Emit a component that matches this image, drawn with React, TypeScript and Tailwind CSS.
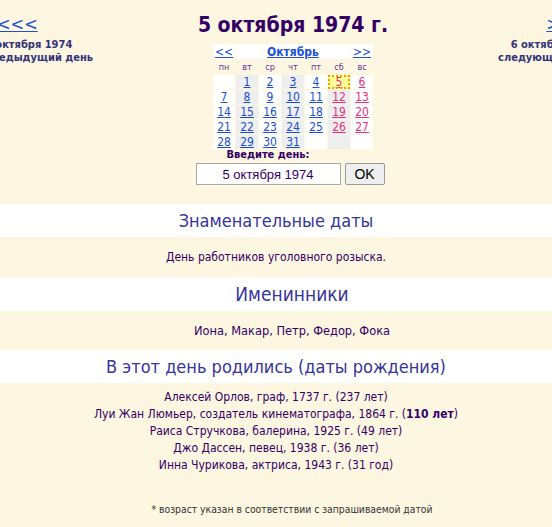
const tahoma = "font-['DejaVu_Sans_Condensed','DejaVu_Sans',sans-serif]"

type Day = { n?: number; gray: boolean; weekend: boolean; today?: boolean }

// October 1974 starts on a Tuesday
function buildWeeks(): Day[][] {
  const weeks: Day[][] = []
  let week: Day[] = []
  for (let i = 0; i < 35; i++) {
    const col = i % 7
    const day: Day = {
      n: i >= 1 && i <= 31 ? i : undefined,
      gray: col === 1 || col === 3 || col === 5,
      weekend: col >= 5,
      today: i === 5,
    }
    week.push(day)
    if (col === 6) {
      weeks.push(week)
      week = []
    }
  }
  return weeks
}

const births = [
  'Алексей Орлов, граф, 1737 г. (237 лет)',
  null,
  'Раиса Стручкова, балерина, 1925 г. (49 лет)',
  'Джо Дассен, певец, 1938 г. (36 лет)',
  'Инна Чурикова, актриса, 1943 г. (31 год)',
]

function Calendar() {
  const weeks = buildWeeks()
  const names = ['пн', 'вт', 'ср', 'чт', 'пт', 'сб', 'вс']
  return (
    <table className="border-separate border-spacing-[1px] mx-auto">
      <tbody>
        <tr>
          <td className="bg-white text-center text-[12px] leading-[14px] h-[15px]">
            <a href="#" className="text-[#2050d8] underline">&lt;&lt;</a>
          </td>
          <td colSpan={5} className="bg-white text-center text-[12px] leading-[14px] font-bold">
            <a href="#" className="text-[#2050d8] underline">Октябрь</a>
          </td>
          <td className="bg-white text-center text-[12px] leading-[14px]">
            <a href="#" className="text-[#2050d8] underline">&gt;&gt;</a>
          </td>
        </tr>
        <tr>
          {names.map((d) => (
            <td key={d} className="h-[14px] text-center text-[9px] leading-[14px] text-[#663399]">
              {d}
            </td>
          ))}
        </tr>
        {weeks.map((w, i) => (
          <tr key={i}>
            {w.map((d, j) => (
              <td
                key={j}
                className={
                  'w-[22px] h-[14px] text-center text-[12px] leading-[14px] ' +
                  (d.today
                    ? 'bg-[#ffff99] outline-2 outline-dotted outline-[#ff9900] -outline-offset-2'
                    : d.gray
                      ? 'bg-[#eeeeee]'
                      : 'bg-white')
                }
              >
                {d.n && (
                  <a
                    href="#"
                    className={d.weekend ? 'text-[#e8307c] underline' : 'text-[#1a4fd0] underline'}
                  >
                    {d.n}
                  </a>
                )}
              </td>
            ))}
          </tr>
        ))}
      </tbody>
    </table>
  )
}

function SectionTitle({
  children,
  shift,
  size,
  height,
}: {
  children: React.ReactNode
  shift?: boolean
  size: string
  height: string
}) {
  return (
    <div className={`bg-white ${height} flex items-center justify-center ` + (shift ? 'pl-[32px]' : '')}>
      <h2 className={size + ' text-[#35359a]'}>{children}</h2>
    </div>
  )
}

export default function App() {
  return (
    <div className={`min-h-[527px] bg-[#fdf6e1] overflow-hidden text-[#330066] ${tahoma}`}>
      <div className="flex ml-[-15px] w-[713px]">
        {/* previous day */}
        <div className="w-[111px] shrink-0 text-left pt-[12px]">
          <a href="#" className="ml-[12px] text-[#2050d8] underline text-[18px] leading-[24px]">
            &lt;&lt;&lt;
          </a>
          <div className="text-[11px] leading-[13px] font-bold text-[#33337a] mt-[1px] whitespace-nowrap">
            4 октября 1974
            <br />
            предыдущий день
          </div>
        </div>

        <div className="w-[394px] shrink-0 flex flex-col items-center">
          <h1 className="text-[21px] font-bold text-[#330066] leading-[26px] mt-[12px]">5 октября 1974 г.</h1>
          <div className="mt-[5px]">
            <Calendar />
          </div>
          <div className="flex items-end gap-[4px] mt-[-2px] mr-[6px]">
            <div className="flex flex-col items-center">
              <div className="text-[11px] font-bold leading-[14px]">Введите день:</div>
              <input
                readOnly
                value="5 октября 1974"
                className="w-[145px] h-[22px] bg-white border border-[#aaaaaa] text-center text-[13px] text-[#330066] font-['Liberation_Sans',sans-serif] mt-[1px]"
              />
            </div>
            <button className="w-[40px] h-[22px] bg-[#efefef] border border-[#999999] rounded-[2px] text-[14px] text-black font-['Liberation_Sans',sans-serif]">
              OK
            </button>
          </div>
        </div>

        {/* next day */}
        <div className="w-[108px] shrink-0 text-right pt-[12px]">
          <a href="#" className="mr-[11px] text-[#2050d8] underline text-[18px] leading-[24px]">
            &gt;&gt;&gt;
          </a>
          <div className="text-[11px] leading-[13px] font-bold text-[#33337a] mt-[1px] whitespace-nowrap">
            6 октября 1974
            <br />
            следующий день
          </div>
        </div>
      </div>

      <div className="mt-[19px]">
        <SectionTitle size="text-[18px]" height="h-[33px]">
          Знаменательные даты
        </SectionTitle>
        <div className="h-[40px] flex items-center justify-center text-[12px]">
          День работников уголовного розыска.
        </div>
        <SectionTitle shift size="text-[19px]" height="h-[34px]">
          Именинники
        </SectionTitle>
        <div className="h-[39px] flex items-center justify-center pl-[32px] text-[12.7px]">
          Иона, Макар, Петр, Федор, Фока
        </div>
        <SectionTitle size="text-[18px]" height="h-[33px]">
          В этот день родились (даты рождения)
        </SectionTitle>
        <div className="pt-[6px] text-center text-[12px] leading-[17px]">
          {births.map((b, i) =>
            b ? (
              <div key={i}>{b}</div>
            ) : (
              <div key={i}>
                Луи Жан Люмьер, создатель кинематографа, 1864 г. (<b>110 лет</b>)
              </div>
            ),
          )}
        </div>
        <div className="pt-[28px] pl-[32px] text-center text-[10.3px] text-[#333333]">
          * возраст указан в соответствии с запрашиваемой датой
        </div>
      </div>
    </div>
  )
}
